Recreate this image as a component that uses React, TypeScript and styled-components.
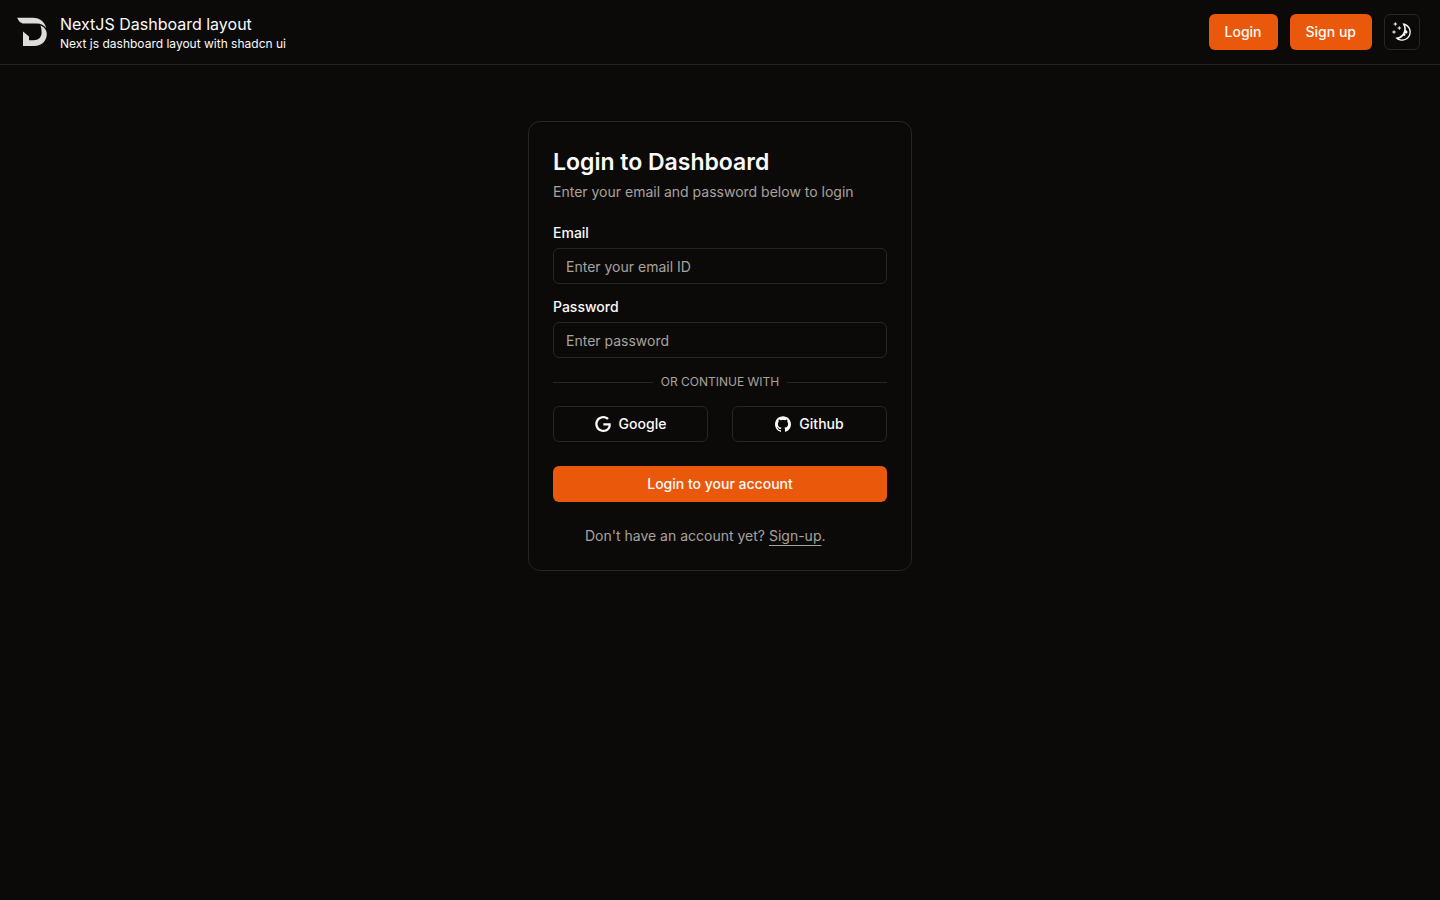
import React from "react";
import styled, { createGlobalStyle } from "styled-components";
import { SiGithub, SiGoogle } from "react-icons/si";

const color = {
  background: "#0c0a09",
  foreground: "#fafaf9",
  border: "#292524",
  muted: "#a8a29e",
  primary: "#ea580c",
};

const GlobalStyle = createGlobalStyle`
  *, *::before, *::after { box-sizing: border-box; }
  body {
    margin: 0;
    background: ${color.background};
    color: ${color.foreground};
    font-family: Inter, "Liberation Sans", sans-serif;
    font-size: 16px;
    line-height: 24px;
  }
  h1, p { margin: 0; }
  button, input { font-family: inherit; }
`;

const Header = styled.header`
  display: flex;
  align-items: center;
  justify-content: space-between;
  padding: 12px 20px 12px 16px;
  border-bottom: 1px solid ${color.border};
`;

const Brand = styled.a`
  display: flex;
  align-items: center;
  gap: 12px;
  color: inherit;
  text-decoration: none;
`;

const BrandText = styled.div`
  display: flex;
  flex-direction: column;
`;

const BrandName = styled.span`
  font-size: 16px;
  line-height: 24px;
`;

const BrandTagline = styled.span`
  font-size: 12px;
  line-height: 16px;
`;

const Actions = styled.nav`
  display: flex;
  align-items: center;
  gap: 12px;
`;

const Button = styled.button<{ $variant?: "primary" | "outline"; $icon?: boolean }>`
  display: inline-flex;
  align-items: center;
  justify-content: center;
  gap: 8px;
  height: 36px;
  width: ${(p) => (p.$icon ? "36px" : "auto")};
  padding: ${(p) => (p.$icon ? "0" : "0 16px")};
  border: ${(p) => (p.$variant === "outline" ? `1px solid ${color.border}` : "0")};
  border-radius: 6px;
  background: ${(p) => (p.$variant === "outline" ? color.background : color.primary)};
  color: ${color.foreground};
  font-size: 14px;
  font-weight: 500;
  line-height: 20px;
  cursor: pointer;
`;

const Main = styled.main`
  display: flex;
  justify-content: center;
  padding: 56px 16px;
`;

const Card = styled.form`
  display: flex;
  flex-direction: column;
  gap: 24px;
  width: 100%;
  max-width: 384px;
  padding: 24px;
  border: 1px solid ${color.border};
  border-radius: 12px;
`;

const CardHeader = styled.div`
  display: flex;
  flex-direction: column;
  gap: 4px;
`;

const Title = styled.h1`
  font-size: 23px;
  font-weight: 600;
  line-height: 32px;
`;

const MutedText = styled.p`
  color: ${color.muted};
  font-size: 14px;
  line-height: 20px;
`;

const Fields = styled.div`
  display: flex;
  flex-direction: column;
  gap: 16px;
`;

const Field = styled.div`
  display: flex;
  flex-direction: column;
  gap: 8px;
`;

const Label = styled.label`
  font-size: 14px;
  font-weight: 500;
  line-height: 14px;
`;

const Input = styled.input`
  width: 100%;
  height: 36px;
  padding: 4px 12px;
  border: 1px solid ${color.border};
  border-radius: 6px;
  background: transparent;
  color: ${color.foreground};
  font-size: 14px;
  &::placeholder { color: ${color.muted}; opacity: 1; }
`;

const Divider = styled.div`
  display: flex;
  align-items: center;
  gap: 8px;
  color: ${color.muted};
  font-size: 12px;
  line-height: 16px;
  text-transform: uppercase;
  &::before, &::after {
    content: "";
    flex: 1;
    border-top: 1px solid ${color.border};
  }
`;

const Providers = styled.div`
  display: grid;
  grid-template-columns: 1fr 1fr;
  gap: 24px;
`;

const SignUpNote = styled(MutedText)`
  padding: 0 32px;
`;

const SignUpLink = styled.a`
  color: inherit;
  text-decoration: underline;
  text-underline-offset: 4px;
`;

function Logo() {
  return (
    <svg width="32" height="32" viewBox="0 0 32 32" fill="#dcdcdc" aria-hidden="true">
      <path d="M1.2 1.8H17C24.2 1.8 28.8 6 30.3 12.2C28 9.3 25 7.6 20.5 7.6H8C4.6 7.6 2.6 5.2 1.2 1.8Z" />
      <path d="M24.4 9.4C28.8 11.2 30.8 14.4 30.8 18C30.8 25 25.5 30 18.5 30H7V15.4L13 20.6V24.2H17.6C22.4 24.2 25.6 21.4 25.6 16.8C25.6 13.8 25.4 11.6 24.4 9.4Z" />
    </svg>
  );
}

function MoonIcon() {
  return (
    <svg width="20" height="20" viewBox="0 0 15 15" fill="currentColor" aria-hidden="true">
      <path
        fillRule="evenodd"
        clipRule="evenodd"
        d="M2.89998 0.499976C2.89998 0.279062 2.72089 0.0999756 2.49998 0.0999756C2.27906 0.0999756 2.09998 0.279062 2.09998 0.499976V1.09998H1.49998C1.27906 1.09998 1.09998 1.27906 1.09998 1.49998C1.09998 1.72089 1.27906 1.89998 1.49998 1.89998H2.09998V2.49998C2.09998 2.72089 2.27906 2.89998 2.49998 2.89998C2.72089 2.89998 2.89998 2.72089 2.89998 2.49998V1.89998H3.49998C3.72089 1.89998 3.89998 1.72089 3.89998 1.49998C3.89998 1.27906 3.72089 1.09998 3.49998 1.09998H2.89998V0.499976ZM5.89998 3.49998C5.89998 3.27906 5.72089 3.09998 5.49998 3.09998C5.27906 3.09998 5.09998 3.27906 5.09998 3.49998V4.09998H4.49998C4.27906 4.09998 4.09998 4.27906 4.09998 4.49998C4.09998 4.72089 4.27906 4.89998 4.49998 4.89998H5.09998V5.49998C5.09998 5.72089 5.27906 5.89998 5.49998 5.89998C5.72089 5.89998 5.89998 5.72089 5.89998 5.49998V4.89998H6.49998C6.72089 4.89998 6.89998 4.72089 6.89998 4.49998C6.89998 4.27906 6.72089 4.09998 6.49998 4.09998H5.89998V3.49998ZM1.89998 6.49998C1.89998 6.27906 1.72089 6.09998 1.49998 6.09998C1.27906 6.09998 1.09998 6.27906 1.09998 6.49998V7.09998H0.499976C0.279062 7.09998 0.0999756 7.27906 0.0999756 7.49998C0.0999756 7.72089 0.279062 7.89998 0.499976 7.89998H1.09998V8.49998C1.09998 8.72089 1.27906 8.89997 1.49998 8.89997C1.72089 8.89997 1.89998 8.72089 1.89998 8.49998V7.89998H2.49998C2.72089 7.89998 2.89998 7.72089 2.89998 7.49998C2.89998 7.27906 2.72089 7.09998 2.49998 7.09998H1.89998V6.49998ZM8.54406 0.98184L8.24618 0.941586C8.03275 0.917676 7.90692 1.1655 8.02936 1.34194C8.17013 1.54479 8.29981 1.75592 8.41754 1.97445C8.91878 2.90485 9.20322 3.96932 9.20322 5.10022C9.20322 8.37201 6.82247 11.0878 3.69887 11.6097C3.45736 11.65 3.20988 11.6772 2.96008 11.6906C2.74563 11.702 2.62729 11.9535 2.77721 12.1072C2.84551 12.1773 2.91535 12.2458 2.98667 12.3128L3.05883 12.3795L3.31883 12.6045L3.50684 12.7532L3.62796 12.8433L3.81491 12.9742L3.99079 13.089C4.11175 13.1651 4.23536 13.2375 4.36157 13.3059L4.62496 13.4412L4.88553 13.5607L5.18837 13.6828L5.43169 13.7686C5.56564 13.8128 5.70149 13.8529 5.83857 13.8885C5.94262 13.9155 6.04767 13.9401 6.15405 13.9622C6.27993 13.9883 6.40713 14.0109 6.53544 14.0298L6.85241 14.0685L7.11934 14.0892C7.24637 14.0965 7.37436 14.1002 7.50322 14.1002C11.1483 14.1002 14.1032 11.1453 14.1032 7.50023C14.1032 7.25044 14.0893 7.00389 14.0623 6.76131L14.0255 6.48407C13.991 6.26083 13.9453 6.04129 13.8891 5.82642C13.8213 5.56709 13.7382 5.31398 13.6409 5.06881L13.5279 4.80132L13.4507 4.63542L13.3766 4.48666C13.2178 4.17773 13.0353 3.88295 12.8312 3.60423L12.6782 3.40352L12.4793 3.16432L12.3157 2.98361L12.1961 2.85951L12.0355 2.70246L11.8134 2.50184L11.4925 2.24191L11.2483 2.06498L10.9562 1.87446L10.6346 1.68894L10.3073 1.52378L10.1938 1.47176L9.95488 1.3706L9.67791 1.2669L9.42566 1.1846L9.10075 1.09489L8.83599 1.03486L8.54406 0.98184ZM10.4032 5.30023C10.4032 4.27588 10.2002 3.29829 9.83244 2.40604C11.7623 3.28995 13.1032 5.23862 13.1032 7.50023C13.1032 10.593 10.596 13.1002 7.50322 13.1002C6.63646 13.1002 5.81597 12.9036 5.08355 12.5522C6.5419 12.0941 7.81081 11.2082 8.74322 10.0416C8.87963 10.2284 9.10028 10.3497 9.34928 10.3497C9.76349 10.3497 10.0993 10.0139 10.0993 9.59971C10.0993 9.24256 9.84965 8.94373 9.51535 8.86816C9.57741 8.75165 9.63653 8.63334 9.6926 8.51332C9.88358 8.63163 10.1088 8.69993 10.35 8.69993C11.0403 8.69993 11.6 8.14028 11.6 7.44993C11.6 6.75976 11.0406 6.20024 10.3505 6.19993C10.3853 5.90487 10.4032 5.60464 10.4032 5.30023Z"
      />
    </svg>
  );
}

export default function App() {
  return (
    <>
      <GlobalStyle />
      <Header>
        <Brand href="#">
          <Logo />
          <BrandText>
            <BrandName>NextJS Dashboard layout</BrandName>
            <BrandTagline>Next js dashboard layout with shadcn ui</BrandTagline>
          </BrandText>
        </Brand>
        <Actions>
          <Button type="button">Login</Button>
          <Button type="button">Sign up</Button>
          <Button type="button" $variant="outline" $icon aria-label="Toggle theme">
            <MoonIcon />
          </Button>
        </Actions>
      </Header>
      <Main>
        <Card onSubmit={(event: React.FormEvent) => event.preventDefault()}>
          <CardHeader>
            <Title>Login to Dashboard</Title>
            <MutedText>Enter your email and password below to login</MutedText>
          </CardHeader>
          <Fields>
            <Field>
              <Label htmlFor="email">Email</Label>
              <Input id="email" type="email" placeholder="Enter your email ID" />
            </Field>
            <Field>
              <Label htmlFor="password">Password</Label>
              <Input id="password" type="password" placeholder="Enter password" />
            </Field>
            <Divider>Or continue with</Divider>
            <Providers>
              <Button type="button" $variant="outline">
                <SiGoogle size={16} aria-hidden="true" />
                Google
              </Button>
              <Button type="button" $variant="outline">
                <SiGithub size={16} aria-hidden="true" />
                Github
              </Button>
            </Providers>
          </Fields>
          <Button type="submit">Login to your account</Button>
          <SignUpNote>
            Don't have an account yet? <SignUpLink href="#">Sign-up</SignUpLink>.
          </SignUpNote>
        </Card>
      </Main>
    </>
  );
}
